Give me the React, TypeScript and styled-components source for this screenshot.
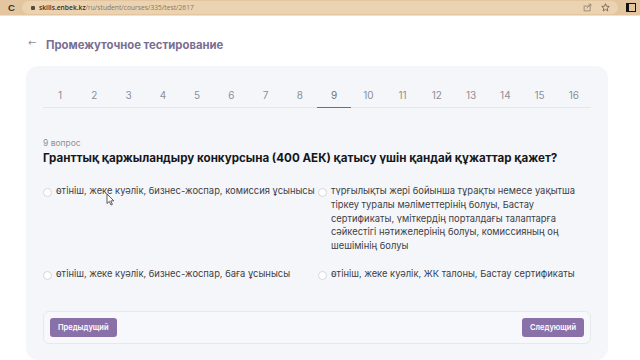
import styled, { createGlobalStyle } from "styled-components"

const tabs = Array.from({ length: 16 }, (_, i) => i + 1)
const active = 9

const answers = [
	"өтініш, жеке куәлік, бизнес-жоспар, комиссия ұсынысы",
	"түрғылықты жері бойынша тұрақты немесе уақытша тіркеу туралы мәліметтерінің болуы, Бастау сертификаты, үміткердің порталдағы талаптарға сәйкестігі нәтижелерінің болуы, комиссияның оң шешімінің болуы",
	"өтініш, жеке куәлік, бизнес-жоспар, баға ұсынысы",
	"өтініш, жеке куәлік, ЖК талоны, Бастау сертификаты",
]

export default function App() {
	return (
		<>
			<GlobalStyle />
			<BrowserBar>
				<Reload>C</Reload>
				<Address>
					<Lock />
					<Url><b>skills.enbek.kz</b>/ru/student/courses/335/test/2617</Url>
					<BarIcons>
						<svg width="9" height="9" viewBox="0 0 12 12" fill="none" stroke="#9c8a74" strokeWidth="1.2">
							<rect x="1.5" y="4" width="8" height="6.5" />
							<path d="M5 7 L10.5 1.5 M7.5 1.5 H10.5 V4.5" />
						</svg>
						<svg width="9" height="9" viewBox="0 0 12 12" fill="none" stroke="#6e5c48" strokeWidth="1.1">
							<path d="M6 1 L7.4 4.3 L11 4.6 L8.3 7 L9.1 10.6 L6 8.7 L2.9 10.6 L3.7 7 L1 4.6 L4.6 4.3 Z" />
						</svg>
					</BarIcons>
				</Address>
				<SideIcon />
			</BrowserBar>
			<Page>
				<Header>
					<Back>←</Back>
					<Title>Промежуточное тестирование</Title>
				</Header>
				<Card>
					<Tabs>
						{tabs.map((n) => (
							<Tab key={n} $active={n === active}>{n}</Tab>
						))}
					</Tabs>
					<Counter>{active} вопрос</Counter>
					<Question>Гранттық қаржыландыру конкурсына (400 АЕК) қатысу үшін қандай құжаттар қажет?</Question>
					<Options>
						{answers.map((a) => (
							<Option key={a}>
								<Radio />
								<OptionText>{a}</OptionText>
							</Option>
						))}
					</Options>
					<Footer>
						<NavButton>Предыдущий</NavButton>
						<NavButton>Следующий</NavButton>
					</Footer>
				</Card>
				<Cursor width="9" height="13" viewBox="0 0 9 13">
					<path d="M1 1 L1 10.5 L3.3 8.4 L5 12 L6.4 11.4 L4.8 7.9 L7.8 7.8 Z" fill="#fff" stroke="#333" strokeWidth="0.8" />
				</Cursor>
			</Page>
		</>
	)
}

const GlobalStyle = createGlobalStyle`
  body {
    margin: 0;
    background: #ffffff;
    font-family: Inter, "Noto Sans", sans-serif;
  }
`

const BrowserBar = styled.div`
  display: flex;
  align-items: center;
  height: 16px;
  background: #e3c59f;
  border-bottom: 1px solid #f1e0c8;
  padding: 0 4px 0 8px;
  box-sizing: border-box;
`

const Reload = styled.div`
  flex: none;
  width: 14px;
  font-family: "Liberation Sans", sans-serif;
  font-size: 9.5px;
  font-weight: 700;
  color: #3d3024;
`

const Address = styled.div`
  flex: 1;
  display: flex;
  align-items: center;
  height: 13px;
  background: #ebd3b2;
  border-radius: 7px;
  padding: 0 8px 0 9px;
  margin-right: 8px;
`

const Lock = styled.div`
  flex: none;
  width: 4px;
  height: 4px;
  background: #5a4a3a;
  border-radius: 1px;
  margin-right: 4px;
  margin-top: 1px;
`

const Url = styled.div`
  flex: 1;
  font-family: "Open Sans", sans-serif;
  font-size: 6.7px;
  color: #8a7560;
  white-space: nowrap;
  b {
    font-weight: 600;
    color: #3b2f22;
  }
`

const BarIcons = styled.div`
  display: flex;
  gap: 9px;
  align-items: center;
`

const SideIcon = styled.div`
  flex: none;
  width: 6px;
  height: 7px;
  border: 1.5px solid #111;
  border-left-width: 3px;
`

const Page = styled.div`
  position: relative;
  padding: 0 32px 0 26px;
`

const Header = styled.div`
  display: flex;
  align-items: center;
  height: 43px;
  padding-top: 7px;
`

const Back = styled.span`
  width: 18px;
  margin-left: 2px;
  font-family: "DejaVu Sans", sans-serif;
  font-size: 10px;
  color: #8e8b9a;
  margin-top: -4px;
`

const Title = styled.h1`
  margin: 0;
  font-size: 11.3px;
  font-weight: 700;
  color: #7a6e92;
`

const Card = styled.div`
  background: #f5f6fa;
  border-radius: 12px;
  padding: 18px 17px 16px;
`

const Tabs = styled.div`
  display: flex;
  border-bottom: 1px solid #e5e7ec;
`

const Tab = styled.div<{ $active?: boolean }>`
  flex: 1;
  text-align: center;
  font-size: 10px;
  color: ${(p) => (p.$active ? "#6d7079" : "#8b8f98")};
  padding: 5px 0 6px;
  margin-bottom: -1px;
  border-bottom: ${(p) => (p.$active ? "1.5px solid #707070" : "1px solid transparent")};
`

const Counter = styled.div`
  margin-top: 30px;
  font-size: 8.5px;
  color: #8f9198;
`

const Question = styled.div`
  margin-top: 3px;
  font-size: 11.6px;
  font-weight: 700;
  color: #16171a;
`

const Options = styled.div`
  display: grid;
  grid-template-columns: 275px 1fr;
  row-gap: 16px;
  margin-top: 21px;
  padding-right: 10px;
`

const Option = styled.div`
  display: flex;
  align-items: flex-start;
  gap: 4px;
`

const Radio = styled.span`
  flex: none;
  width: 7px;
  height: 7px;
  border: 1px solid #d5d8de;
  border-radius: 50%;
  background: #fff;
  margin-top: 2px;
`

const OptionText = styled.div`
  font-size: 9.4px;
  line-height: 13.8px;
  color: #3c3f46;
  margin-top: -2px;
`

const Footer = styled.div`
  display: flex;
  justify-content: space-between;
  margin-top: 30px;
  padding: 6px;
  border: 1px solid #e6e8ee;
  border-radius: 6px;
  background: #f7f8fb;
`

const NavButton = styled.button`
  height: 19px;
  padding: 0 8px;
  border: none;
  border-radius: 3px;
  background: #8a70a8;
  color: #fff;
  font-family: Inter, sans-serif;
  font-size: 7.5px;
  font-weight: 600;
`

const Cursor = styled.svg`
  position: absolute;
  left: 106px;
  top: 177px;
`
